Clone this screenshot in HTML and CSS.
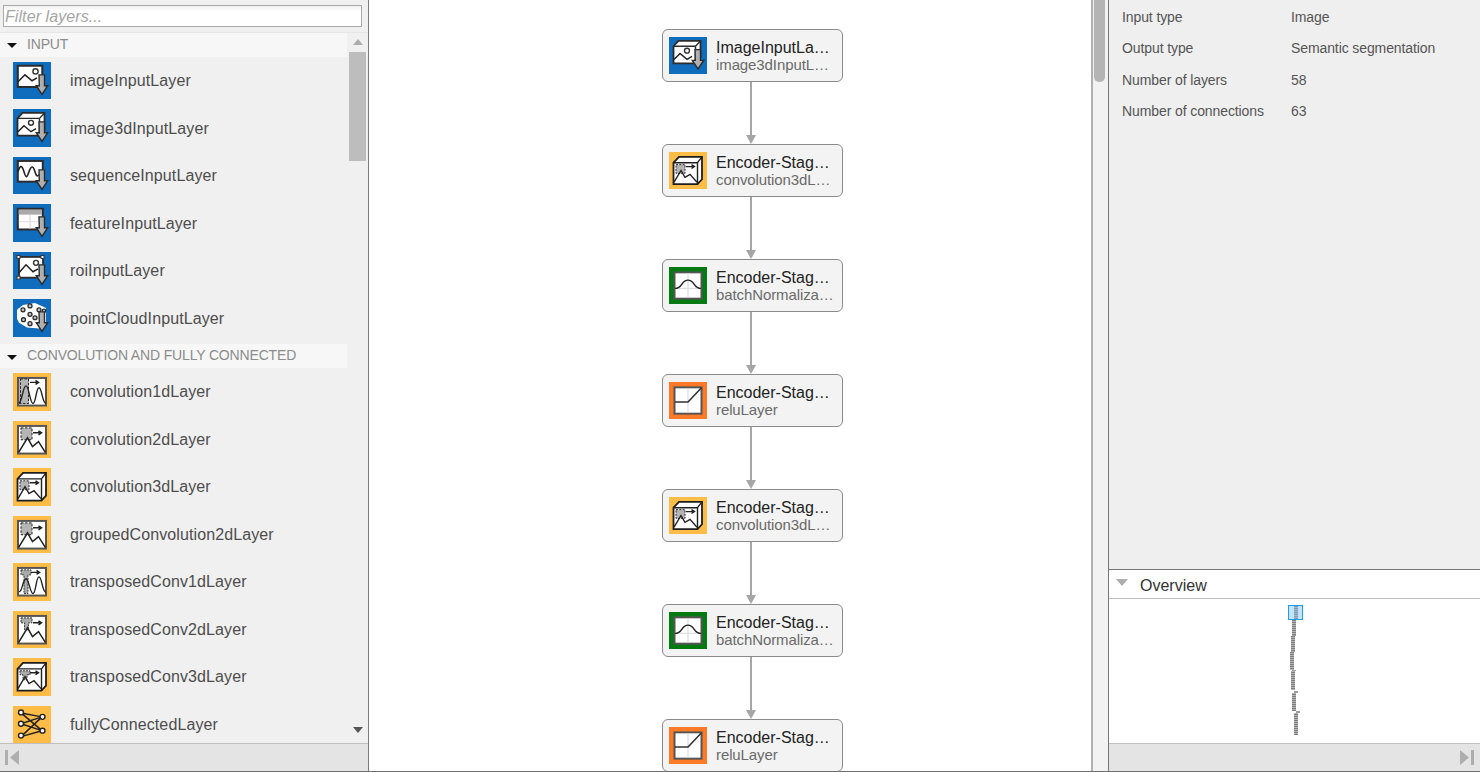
FILE: index.html
```html
<!DOCTYPE html>
<html lang="en">
<head>
<meta charset="utf-8">
<title>Deep Network Designer</title>
<link rel="stylesheet" href="styles.css">
</head>
<body>
<svg class="defs" width="0" height="0" aria-hidden="true">
  <defs>
    <g id="arrow">
      <path d="M26 13h5.500v11h3.200L29 32.800 23.300 24h3z" fill="#b0b0b0" stroke="#2b2b2b" stroke-width="1.400"/>
    </g>
    <symbol id="i-image" viewBox="0 0 38 38" preserveAspectRatio="none">
      <rect x="4.800" y="3.800" width="24.500" height="21.500" fill="#fff" stroke="#2b2b2b" stroke-width="2"/>
      <path d="M5 20l7-7 7 6 5-3" fill="none" stroke="#222" stroke-width="1.500"/>
      <circle cx="22.500" cy="9.500" r="2.600" fill="#fff" stroke="#333" stroke-width="1.400"/>
      <use href="#arrow"/>
    </symbol>
    <symbol id="i-image3d" viewBox="0 0 38 38" preserveAspectRatio="none">
      <path d="M4.500 9.500L9.500 4h22v17l-4.500 6H4.500z" fill="#fff" stroke="#2b2b2b" stroke-width="1.800"/>
      <path d="M4.500 9.500H26.500V27M26.500 9.500l5-5.500" fill="none" stroke="#2b2b2b" stroke-width="1.400"/>
      <path d="M5 23l6-6 7 6 5-3" fill="none" stroke="#222" stroke-width="1.500"/>
      <circle cx="18" cy="14" r="2.500" fill="#fff" stroke="#333" stroke-width="1.400"/>
      <use href="#arrow"/>
    </symbol>
    <symbol id="i-seq" viewBox="0 0 38 38" preserveAspectRatio="none">
      <rect x="4.800" y="4" width="25" height="21" fill="#fff" stroke="#2b2b2b" stroke-width="2"/>
      <path d="M5 15c2-7 4-7 6 0s3 6 5 0 4-7 6 0 3 4 7 0" fill="none" stroke="#222" stroke-width="1.600"/>
      <use href="#arrow"/>
    </symbol>
    <symbol id="i-feature" viewBox="0 0 38 38" preserveAspectRatio="none">
      <rect x="4.800" y="4.800" width="25" height="21" fill="#fff" stroke="#2b2b2b" stroke-width="2"/>
      <rect x="5.800" y="5.800" width="23" height="5" fill="#aaa"/>
      <path d="M5.800 18h23M17 11v14" stroke="#ddd" stroke-width="1.200"/>
      <use href="#arrow"/>
    </symbol>
    <symbol id="i-roi" viewBox="0 0 38 38" preserveAspectRatio="none">
      <rect x="6" y="5" width="24" height="21" fill="#fff" stroke="#2b2b2b" stroke-width="1.800"/>
      <path d="M6 21l7-8 7 7 5-3" fill="none" stroke="#222" stroke-width="1.500"/>
      <circle cx="23" cy="11" r="2.500" fill="#fff" stroke="#333" stroke-width="1.400"/>
      <g fill="#fff" stroke="#333">
        <rect x="4" y="3.500" width="3" height="3"/>
        <rect x="28" y="3.500" width="3" height="3"/>
        <rect x="4" y="24.500" width="3" height="3"/>
      </g>
      <use href="#arrow"/>
    </symbol>
    <symbol id="i-cloud" viewBox="0 0 38 38" preserveAspectRatio="none">
      <path d="M4 11l6-5 12-2 11 5v15l-7 6-12-1-8-5-2-4z" fill="#fff"/>
      <g fill="#c4c4c4" stroke="#2b2b2b" stroke-width="1.300">
        <circle cx="10" cy="11" r="2"/><circle cx="17" cy="7" r="2"/><circle cx="26" cy="11" r="2"/>
        <circle cx="31" cy="12" r="1.700"/><circle cx="17" cy="15.500" r="2"/><circle cx="10.500" cy="21" r="2"/>
        <circle cx="22" cy="19" r="2"/><circle cx="17" cy="25" r="2"/>
      </g>
      <use href="#arrow"/>
    </symbol>
    <symbol id="i-conv1" viewBox="0 0 38 38" preserveAspectRatio="none">
      <rect x="5" y="5" width="28" height="28" fill="#fff" stroke="#555" stroke-width="2"/>
      <rect x="6" y="6" width="10" height="26" fill="#b5b5b5"/>
      <rect x="7.500" y="6" width="8" height="25" fill="none" stroke="#222" stroke-dasharray="2.500 1.500"/>
      <path d="M6 31c3-2 4-18 7-18s4 18 7 18 3-16 6-16 3 15 7 16" fill="none" stroke="#222" stroke-width="1.400"/>
      <path d="M17 9.500h8M22.500 7.500l3 2-3 2" fill="none" stroke="#222" stroke-width="1.500"/>
    </symbol>
    <symbol id="i-conv2" viewBox="0 0 38 38" preserveAspectRatio="none">
      <rect x="5" y="5" width="28" height="28" fill="#fff" stroke="#555" stroke-width="2"/>
      <rect x="8" y="7" width="11" height="12" fill="#b5b5b5" stroke="#222" stroke-dasharray="2.500 1.500"/>
      <path d="M5.500 32l9-15 5 9 6-5 7 11" fill="none" stroke="#222" stroke-width="1.500"/>
      <path d="M20 12h8M25.500 10l3 2-3 2" fill="none" stroke="#222" stroke-width="1.500"/>
    </symbol>
    <symbol id="i-conv3" viewBox="0 0 38 38" preserveAspectRatio="none">
      <path d="M4.500 11L10 5h23v23l-4.500 5H4.500z" fill="#fff" stroke="#1e1e1e" stroke-width="1.800"/>
      <path d="M4.500 11h24v22M28.500 11L33 5" fill="none" stroke="#1e1e1e" stroke-width="1.400"/>
      <rect x="7" y="13" width="9" height="9" fill="#b5b5b5" stroke="#222" stroke-dasharray="2 1.300"/>
      <path d="M5 31l7-12 4 7 5-3 7 8" fill="none" stroke="#222" stroke-width="1.400"/>
      <path d="M17 15h8M22.500 13l3 2-3 2" fill="none" stroke="#222" stroke-width="1.400"/>
    </symbol>
    <symbol id="i-trans1" viewBox="0 0 38 38" preserveAspectRatio="none">
      <rect x="5" y="5" width="28" height="28" fill="#fff" stroke="#555" stroke-width="2"/>
      <path d="M8 7h10v5h-3v19h-4V12H8z" fill="#aaa" stroke="#333" stroke-dasharray="2 1"/>
      <path d="M6 29c3 1 4-13 7-13s4 15 7 15 3-17 6-17 3 15 7 16" fill="none" stroke="#222" stroke-width="1.400"/>
      <path d="M18 9.500h8M23.500 7.500l3 2-3 2" fill="none" stroke="#222" stroke-width="1.500"/>
    </symbol>
    <symbol id="i-trans2" viewBox="0 0 38 38" preserveAspectRatio="none">
      <rect x="5" y="5" width="28" height="28" fill="#fff" stroke="#555" stroke-width="2"/>
      <path d="M8 7h11v5h-3.500v7h-4v-7H8z" fill="#aaa" stroke="#333" stroke-dasharray="2 1"/>
      <path d="M5.500 32l9-15 5 9 6-5 7 11" fill="none" stroke="#222" stroke-width="1.500"/>
      <path d="M20 12h8M25.500 10l3 2-3 2" fill="none" stroke="#222" stroke-width="1.500"/>
    </symbol>
    <symbol id="i-trans3" viewBox="0 0 38 38" preserveAspectRatio="none">
      <path d="M4.500 11L10 5h23v23l-4.500 5H4.500z" fill="#fff" stroke="#1e1e1e" stroke-width="1.800"/>
      <path d="M4.500 11h24v22M28.500 11L33 5" fill="none" stroke="#1e1e1e" stroke-width="1.400"/>
      <path d="M7 13h10v4h-3v5h-4v-5H7z" fill="#aaa" stroke="#333" stroke-dasharray="2 1"/>
      <path d="M5 31l7-12 4 7 5-3 7 8" fill="none" stroke="#222" stroke-width="1.400"/>
      <path d="M17 15h8M22.500 13l3 2-3 2" fill="none" stroke="#222" stroke-width="1.400"/>
    </symbol>
    <symbol id="i-fc" viewBox="0 0 38 38" preserveAspectRatio="none">
      <path d="M8 7L29 11M8 7L29 25M8 18L29 11M8 18L29 25M8 31L29 11M8 31L29 25" stroke="#222" stroke-width="1.500" fill="none"/>
      <g fill="#fff" stroke="#222" stroke-width="1.400">
        <circle cx="8" cy="6.500" r="2.500"/><circle cx="8" cy="18" r="2.500"/><circle cx="8" cy="30" r="2.500"/>
        <circle cx="29.500" cy="11" r="2.500"/><circle cx="29.500" cy="25" r="2.500"/>
      </g>
    </symbol>
    <symbol id="i-bn" viewBox="0 0 38 38" preserveAspectRatio="none">
      <rect x="5.500" y="5.500" width="27" height="27" fill="#fff" stroke="#555" stroke-width="2"/>
      <path d="M19 6.500v25M6.500 22h25" stroke="#ddd" stroke-width="1.200"/>
      <path d="M6 22c3 0 5-1.500 7-4.500s4-4 6-4 4 1 6 4 4 4.500 7 4.500" fill="none" stroke="#222" stroke-width="1.400"/>
    </symbol>
    <symbol id="i-relu" viewBox="0 0 38 38" preserveAspectRatio="none">
      <rect x="5.500" y="5.500" width="27" height="27" fill="#fff" stroke="#555" stroke-width="2"/>
      <path d="M19 6.500v25" stroke="#ddd" stroke-width="1.200"/>
      <path d="M6 20.500h13L32.500 6" fill="none" stroke="#333" stroke-width="1.600"/>
    </symbol>
    <pattern id="stripes" width="4" height="2" patternUnits="userSpaceOnUse">
      <rect width="4" height="2" fill="#b4b4b4"/>
      <rect width="4" height="1" fill="#7e7e7e"/>
    </pattern>
  </defs>
</svg>

<div class="app">
  <aside class="left">
    <div class="filter"><div class="filter-box">Filter layers...</div></div>
    <div class="library">
      <div class="list">
        <section class="group group-first">
          <h2 class="group-head"><span class="caret"></span>INPUT</h2>
          <div class="row"><svg class="ico blue"><use href="#i-image"/></svg><span class="row-label">imageInputLayer</span></div>
          <div class="row"><svg class="ico blue"><use href="#i-image3d"/></svg><span class="row-label">image3dInputLayer</span></div>
          <div class="row"><svg class="ico blue"><use href="#i-seq"/></svg><span class="row-label">sequenceInputLayer</span></div>
          <div class="row"><svg class="ico blue"><use href="#i-feature"/></svg><span class="row-label">featureInputLayer</span></div>
          <div class="row"><svg class="ico blue"><use href="#i-roi"/></svg><span class="row-label">roiInputLayer</span></div>
          <div class="row"><svg class="ico blue"><use href="#i-cloud"/></svg><span class="row-label">pointCloudInputLayer</span></div>
        </section>
        <section class="group">
          <h2 class="group-head"><span class="caret"></span>CONVOLUTION AND FULLY CONNECTED</h2>
          <div class="row"><svg class="ico yellow"><use href="#i-conv1"/></svg><span class="row-label">convolution1dLayer</span></div>
          <div class="row"><svg class="ico yellow"><use href="#i-conv2"/></svg><span class="row-label">convolution2dLayer</span></div>
          <div class="row"><svg class="ico yellow"><use href="#i-conv3"/></svg><span class="row-label">convolution3dLayer</span></div>
          <div class="row"><svg class="ico yellow"><use href="#i-conv2"/></svg><span class="row-label">groupedConvolution2dLayer</span></div>
          <div class="row"><svg class="ico yellow"><use href="#i-trans1"/></svg><span class="row-label">transposedConv1dLayer</span></div>
          <div class="row"><svg class="ico yellow"><use href="#i-trans2"/></svg><span class="row-label">transposedConv2dLayer</span></div>
          <div class="row"><svg class="ico yellow"><use href="#i-trans3"/></svg><span class="row-label">transposedConv3dLayer</span></div>
          <div class="row"><svg class="ico yellow"><use href="#i-fc"/></svg><span class="row-label">fullyConnectedLayer</span></div>
        </section>
      </div>
      <div class="lscroll">
        <span class="tri-up"></span>
        <div class="lthumb"></div>
        <span class="tri-down"></span>
      </div>
    </div>
    <div class="hbar">
      <svg class="bar-ico" viewBox="0 0 14 15"><path d="M0 0h3v15H0zM14 0v15L5 7.500z" fill="#aeaeae"/></svg>
    </div>
  </aside>

  <main class="canvas">
    <div class="node"><svg class="ico blue"><use href="#i-image3d"/></svg><div class="node-text"><div class="node-title">ImageInputLa…</div><div class="node-sub">image3dInputL…</div></div></div>
    <div class="edge"></div>
    <div class="node"><svg class="ico yellow"><use href="#i-conv3"/></svg><div class="node-text"><div class="node-title">Encoder-Stag…</div><div class="node-sub">convolution3dL…</div></div></div>
    <div class="edge"></div>
    <div class="node"><svg class="ico green"><use href="#i-bn"/></svg><div class="node-text"><div class="node-title">Encoder-Stag…</div><div class="node-sub">batchNormaliza…</div></div></div>
    <div class="edge"></div>
    <div class="node"><svg class="ico orange"><use href="#i-relu"/></svg><div class="node-text"><div class="node-title">Encoder-Stag…</div><div class="node-sub">reluLayer</div></div></div>
    <div class="edge"></div>
    <div class="node"><svg class="ico yellow"><use href="#i-conv3"/></svg><div class="node-text"><div class="node-title">Encoder-Stag…</div><div class="node-sub">convolution3dL…</div></div></div>
    <div class="edge"></div>
    <div class="node"><svg class="ico green"><use href="#i-bn"/></svg><div class="node-text"><div class="node-title">Encoder-Stag…</div><div class="node-sub">batchNormaliza…</div></div></div>
    <div class="edge"></div>
    <div class="node"><svg class="ico orange"><use href="#i-relu"/></svg><div class="node-text"><div class="node-title">Encoder-Stag…</div><div class="node-sub">reluLayer</div></div></div>
  </main>

  <div class="vscroll"><div class="vthumb"></div></div>

  <aside class="right">
    <dl class="props">
      <dt>Input type</dt><dd>Image</dd>
      <dt>Output type</dt><dd>Semantic segmentation</dd>
      <dt>Number of layers</dt><dd>58</dd>
      <dt>Number of connections</dt><dd>63</dd>
    </dl>
    <div class="overview">
      <div class="overview-head"><span class="tri-grey"></span>Overview</div>
      <svg class="minimap" viewBox="1109 599 371 144">
        <g fill="url(#stripes)">
          <rect x="1294" y="606" width="4" height="14"/>
          <rect x="1292" y="620" width="4" height="16"/>
          <rect x="1291" y="636" width="4" height="16"/>
          <rect x="1290" y="652" width="4" height="18"/>
          <rect x="1291" y="671" width="4" height="19"/>
          <rect x="1292" y="693" width="4" height="18"/>
          <rect x="1294" y="713" width="4" height="22"/>
        </g>
        <g fill="#a0a0a0">
          <rect x="1293" y="635" width="3" height="1"/>
          <rect x="1292" y="670" width="4" height="1"/>
          <rect x="1294" y="691" width="4" height="2"/>
          <rect x="1296" y="711" width="4" height="2"/>
        </g>
        <rect x="1288.500" y="605.500" width="14" height="14" fill="#7cc2f5" fill-opacity=".45" stroke="#1a9ff0"/>
      </svg>
      <div class="hbar hbar-right">
        <svg class="bar-ico" viewBox="0 0 14 15"><path d="M14 0h-3v15h3zM0 0v15l9-7.500z" fill="#aeaeae"/></svg>
      </div>
    </div>
  </aside>
</div>
</body>
</html>
```
FILE: styles.css
```css
* { box-sizing: border-box; }
html, body { margin: 0; height: 100%; overflow: hidden; }
body { font-family: "Liberation Sans", Arial, sans-serif; background: #fff; color: #4d4d4d; }
.defs { position: absolute; }

.app { display: flex; height: 772px; border-bottom: 1px solid #6e6e6e; }

/* left library */
.left { width: 369px; flex: none; display: flex; flex-direction: column; background: #f0f0f0; border-right: 1px solid #7b7b7b; }
.filter { height: 33px; flex: none; padding: 5px 6px 0 3px; border-bottom: 1px solid #e6e6e6; }
.filter-box { height: 22px; border: 1px solid #aaa; background: linear-gradient(#efefef, #fff 5px); font-style: italic; font-size: 16px; line-height: 21px; letter-spacing: .08px; color: #a6a6a6; padding-left: 1px; }
.library { flex: 1; min-height: 0; display: flex; }
.list { width: 347px; flex: none; overflow: hidden; }
.group-first { margin-bottom: 2.250px; }
.group-head { display: flex; align-items: center; height: 24px; margin: 0; padding: 0 0 2px 7px; background: #f7f7f7; font-size: 14px; font-weight: 400; letter-spacing: -.16px; color: #8c8c8c; }
.group-first .group-head { height: 23.750px; }
.caret { width: 0; height: 0; margin-right: 10px; margin-top: 4px; border: 5px solid transparent; border-top: 5px solid #111; border-bottom: 0; }
.row { display: flex; align-items: center; height: 47.500px; padding-left: 13px; font-size: 16px; letter-spacing: .11px; color: #4d4d4d; white-space: nowrap; }
.row-label { padding-top: 1px; }
.ico { display: block; flex: none; width: 38px; height: 37.500px; }
.row .ico { margin-right: 19px; }
.blue { background: #106cbc; }
.yellow { background: #ffbd47; }
.green { background: #057a12; }
.orange { background: #fa7a28; }

.lscroll { width: 21px; flex: none; display: flex; flex-direction: column; align-items: center; padding: 6px 0 10px; }
.tri-up { width: 0; height: 0; margin-left: 1px; border: 5px solid transparent; border-top: 0; border-bottom: 6px solid #acacac; }
.lthumb { width: 17px; height: 109px; margin-top: 7px; background: #bdbdbd; }
.tri-down { width: 0; height: 0; margin-top: auto; margin-left: 1px; border: 5px solid transparent; border-bottom: 0; border-top: 6px solid #555; }

.hbar { height: 28px; flex: none; background: #e4e4e4; border-top: 1px solid #c0c0c0; display: flex; align-items: center; padding: 0 6px 0 5px; }
.bar-ico { width: 14px; height: 15px; display: block; }
.hbar-right { justify-content: flex-end; }

/* canvas */
.canvas { flex: 1; min-width: 0; background: #fff; overflow: hidden; display: flex; flex-direction: column; align-items: flex-start; padding: 29px 0 0 293px; }
.node { width: 181px; height: 53px; flex: none; display: flex; align-items: center; padding-left: 6px; background: #f3f3f3; border: 1px solid #8a8a8a; border-radius: 6px; }
.node .ico { margin-right: 9px; height: 37px; }
.node-text { white-space: nowrap; }
.node-title { font-size: 16px; line-height: 20px; margin-bottom: -2px; color: #222; }
.node-sub { font-size: 15px; line-height: 17px; letter-spacing: -.1px; color: #6a6a6a; }
.edge { width: 12px; height: 62px; flex: none; margin-left: 83px; display: flex; flex-direction: column; align-items: center; }
.edge::before { content: ""; flex: 1; width: 2px; background: #a6a6a6; }
.edge::after { content: ""; width: 0; height: 0; border: 5.500px solid transparent; border-bottom: 0; border-top: 9px solid #a6a6a6; }

/* canvas scrollbar */
.vscroll { width: 17px; flex: none; background: #f2f2f2; border-left: 2px solid #b0b0b0; padding-left: 1px; }
.vthumb { width: 11px; height: 82px; border-radius: 0 0 5px 5px; background: #b4b4b4; }

/* right */
.right { width: 372px; flex: none; display: flex; flex-direction: column; background: #efefef; border-left: 1px solid #777; }
.props { flex: 1; margin: 0; padding: 2px 0 0 13px; display: grid; grid-template-columns: 169px 1fr; grid-auto-rows: 31.250px; align-content: start; font-size: 14px; letter-spacing: -.1px; color: #555; }
.props dt { margin: 0; line-height: 31px; }
.props dd { margin: 0; line-height: 30px; }
.overview { height: 202px; flex: none; display: flex; flex-direction: column; background: #fff; border-top: 1px solid #777; }
.overview-head { height: 29px; flex: none; display: flex; align-items: center; padding: 3px 0 0 7px; font-size: 16px; color: #333; border-bottom: 1px solid #bdbdbd; }
.tri-grey { width: 0; height: 0; margin-right: 12px; margin-top: -7px; border: 6.500px solid transparent; border-bottom: 0; border-top: 7px solid #adadad; }
.minimap { display: block; width: 371px; height: 144px; flex: none; }
```
